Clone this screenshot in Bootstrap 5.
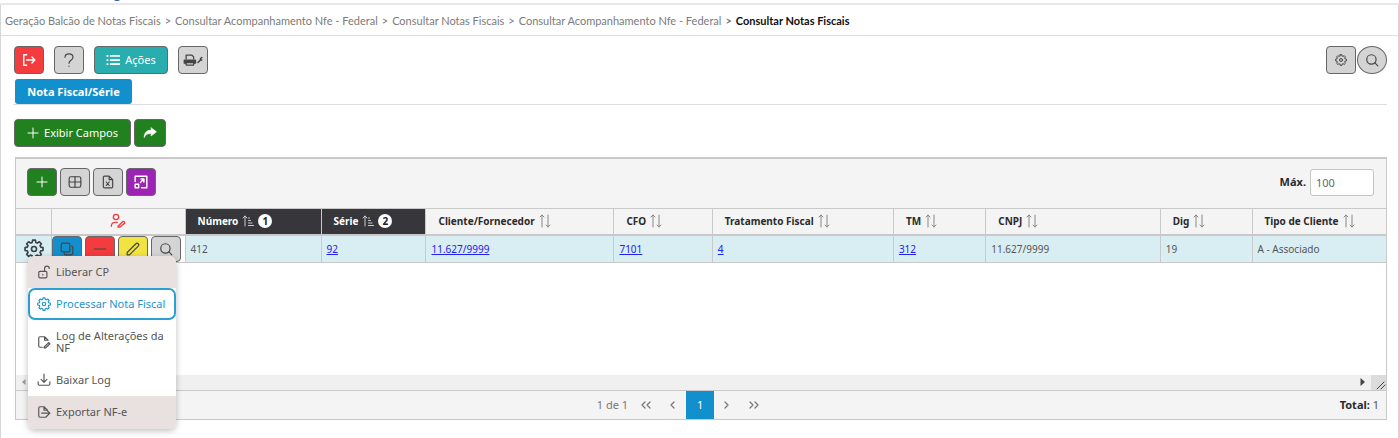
<!DOCTYPE html>
<html lang="pt-BR">
<head>
<meta charset="utf-8">
<meta name="viewport" content="width=device-width, initial-scale=1">
<title>Consultar Notas Fiscais</title>
<link rel="stylesheet" href="https://cdn.jsdelivr.net/npm/bootstrap@5.3.0/dist/css/bootstrap.min.css">
<style>
  body { font-family: "Noto Sans", "Open Sans", sans-serif; font-size: 11px; line-height: 16px; color: #555; background: #fff; overflow-x: hidden; }
  svg { fill: none; stroke: currentColor; stroke-width: 2; stroke-linecap: round; stroke-linejoin: round; display: block; flex: none; }
  .i12 { width: 12px; height: 12px; } .i14 { width: 14px; height: 14px; } .i16 { width: 16px; height: 16px; } .i20 { width: 20px; height: 20px; }
  .brand-strip { height: 5px; border-bottom: 2px solid #e8e8e8; overflow: hidden; padding-left: 112px; }
  .brand-strip span { display: block; width: 10px; height: 9px; margin-top: -8px; border-radius: 50%; background: #2457a0; }
  .page-frame { border: 1px solid #d6d6d6; border-width: 0 1px; min-height: calc(100vh - 5px); }
  .trail { font-family: Lato, sans-serif; font-size: 11px; height: 33px; padding: 0 4px; margin-bottom: -2px; border-bottom: 1px solid #dedede; --bs-breadcrumb-divider: ">"; }
  .trail .breadcrumb-item + .breadcrumb-item { padding-left: 4px; }
  .trail .breadcrumb-item + .breadcrumb-item::before { padding-right: 4px; color: #777; }
  .trail { height: 31px; margin-bottom: 0; }
  .trail .breadcrumb { padding-top: 2px; }
  .trail a { color: #7b7b7b; text-decoration: none; }
  .trail .active { color: #111; font-weight: 700; }
  .btn.tool { min-width: 30px; height: 28px; padding: 0; border: 1px solid #66666b; border-radius: 4px; font-size: 11px; line-height: 16px; color: #444; background: #d4d4d4; display: inline-flex; align-items: center; justify-content: center; }
  .btn.bg-exit { background: #f43b3e; color: #fff; }
  .btn.bg-teal { background: #29adae; color: #fff; width: 74px; gap: 5px; }
  .btn.bg-leaf { background: #21811f; color: #fff; }
  .btn.bg-plum { background: #9c24b2; color: #fff; }
  .btn.bg-sky { background: #1290cd; }
  .btn.bg-rose { background: #f43b3e; }
  .btn.bg-lemon { background: #f2e440; }
  .btn.round { border-radius: 50%; }
  .btn.fields { width: 117px; gap: 5px; }
  .btn.share { width: 32px; }
  .bar-main { gap: 10px; }
  .bar-side { gap: 1px; }
  .bar-fields { gap: 3px; margin-top: 14px; }
  .row-acts { gap: 3px; }
  .content-pad { padding: 10px 11px 0 13px; }
  .tabs-line { border-bottom: 1px solid #dedede; margin: 5px 0 0 -1px; }
  .tabs-line .nav-link { border: 0; background: #1290cd; color: #fff; font-weight: 700; font-size: 11px; width: 117px; height: 25px; margin-left: 2px; padding: 0; text-align: center; border-radius: 3px; }
  .data-box { border: 1px solid #c9c9c9; border-top-width: 2px; margin: 10px 0 0 1px; }
  .data-tools { background: #f4f4f4; height: 49px; padding: 0 12px 3px 11px; }
  .data-tools .btn { margin-right: 3px; }
  .max-input { width: 64px; height: 27px; padding: 0 5px; font-size: 11px; border: 1px solid #c4c4c4; border-radius: 3px; color: #666; }
  .data-table { table-layout: fixed; width: 100%; border-collapse: collapse; font-size: 10px; }
  .data-table th, .data-table td { height: 27px; padding: 0 0 0 5px; border: 1px solid #c9c9c9; vertical-align: middle; white-space: nowrap; }
  .data-table tr > :first-child { border-left: 0; } .data-table tr > :last-child { border-right: 0; }
  .data-table th { height: 26px; padding-left: 12px; background: #f4f4f4; color: #2b2b2b; font-weight: 700; border-bottom-width: 2px; }
  .data-table th.sorted { background: #36363b; color: #fff; }
  .data-table th.centered { padding: 0; }
  .data-table td { background: #d9eef3; }
  .data-table td.menu-cell, .data-table td.acts { padding: 0; }
  .data-table td.acts { background: #fff; }
  .data-table td a { color: #2020f0; }
  .data-table .tool { height: 26px; }
  .sort { width: 12px; height: 14px; color: #888; stroke-width: 1; }
  .sorted .sort { color: #ccc; }
  .order { width: 14px; height: 14px; border-radius: 50%; background: #fff; color: #222; display: inline-flex; align-items: center; justify-content: center; }
  .c-gear { width: 35px; } .c-acts { width: 134px; } .c-num { width: 9.93%; } .c-serie { width: 7.66%; } .c-client { width: 13.72%; }
  .c-cfo { width: 7.18%; } .c-trat { width: 13.22%; } .c-tm { width: 6.74%; } .c-cnpj { width: 12.74%; } .c-dig { width: 6.7%; }
  .gear-btn { background: none; border: 0; padding: 0; color: #3b4248; display: flex; width: 36px; justify-content: center; }
  .row-menu.dropdown-menu { top: 17px; left: 12px; width: 148px; min-width: 0; padding: 0; border: 0; border-radius: 7px; overflow: hidden; font-size: 11px; box-shadow: 0 2px 6px rgba(0,0,0,.25); }
  .row-menu .dropdown-item { display: flex; align-items: center; gap: 5px; min-height: 32px; padding: 0 0 0 9px; line-height: 12px; white-space: normal; color: #555; }
  .row-menu .soft { background: #e9e1e0; }
  .row-menu .picked { border: 2px solid #2e9fd3; border-radius: 7px; color: #2494cb; padding-left: 7px; }
  .row-menu .tall { min-height: 44px; }
  .row-menu .last { min-height: 33px; }
  .free-space { height: 112px; }
  .h-scroll { height: 15px; background: #f0f0f0; padding-left: 5px; color: #444; }
  .h-scroll .corner { width: 15px; height: 15px; background: #dcdcdc; margin-left: 6px; }
  .data-foot { height: 30px; border-top: 1px solid #c9c9c9; border-bottom: 1px solid #c9c9c9; background: #f4f4f4; display: grid; grid-template-columns: 1fr auto 1fr; align-items: center; font-size: 11px; padding-right: 7px; margin-bottom: -1px; }
  .pager { margin-right: 30px; color: #777; }
  .data-foot .page-link { width: 28px; height: 28px; padding: 0; border: 0; border-radius: 0; background: none; color: #777; font-size: 11px; display: flex; align-items: center; justify-content: center; }
  .data-foot .active .page-link { background: #1290cd; color: #fff; }
  .dark { color: #2b2b2b; }
</style>
</head>
<body>
<svg width="0" height="0" class="position-absolute" aria-hidden="true">
  <symbol id="gear" viewBox="0 0 24 24"><path d="M10.3 3h3.4l.5 2.7 1.9.8 2.3-1.6 2.4 2.4-1.5 2.3.8 1.8 2.7.6v3.4l-2.7.5-.8 1.9 1.5 2.3-2.4 2.4-2.3-1.6-1.9.8-.5 2.7h-3.4l-.5-2.7-1.9-.8-2.3 1.6-2.4-2.4 1.6-2.3-.8-1.9-2.7-.5V12l2.7-.6.8-1.8-1.6-2.3 2.4-2.4 2.3 1.6 1.9-.8z" transform="translate(0 -1.6)"/><circle cx="12" cy="12" r="3"/></symbol>
  <symbol id="search" viewBox="0 0 24 24"><circle cx="11" cy="11" r="8"/><path d="M17 17l5 5"/></symbol>
  <symbol id="plus" viewBox="0 0 24 24"><path d="M12 2v20M2 12h20"/></symbol>
  <symbol id="sort" viewBox="0 0 12 14"><path d="M3 13V1M1 3l2-2 2 2M9 1v12M7 11l2 2 2-2"/></symbol>
  <symbol id="sorted" viewBox="0 0 12 14"><path d="M3 12V2M1 4l2-2 2 2M6.500 4h1M6.500 6.500h2M6.500 9h3.500M6.500 11.500h5"/></symbol>
</svg>

<div class="brand-strip"><span></span></div>
<div class="page-frame">
  <nav class="trail d-flex align-items-center" aria-label="Navegação">
    <ol class="breadcrumb m-0">
      <li class="breadcrumb-item"><a href="#">Geração Balcão de Notas Fiscais</a></li>
      <li class="breadcrumb-item"><a href="#">Consultar Acompanhamento Nfe - Federal</a></li>
      <li class="breadcrumb-item"><a href="#">Consultar Notas Fiscais</a></li>
      <li class="breadcrumb-item"><a href="#">Consultar Acompanhamento Nfe - Federal</a></li>
      <li class="breadcrumb-item active" aria-current="page">Consultar Notas Fiscais</li>
    </ol>
  </nav>

  <main class="content-pad">
    <div class="d-flex justify-content-between">
      <div class="d-flex bar-main">
        <button class="btn tool bg-exit" aria-label="Sair"><svg class="i14" viewBox="0 0 24 24"><path d="M8 3H3v18h5M8 12h14M17 7l5 5-5 5" stroke-width="2.500"/></svg></button>
        <button class="btn tool" aria-label="Ajuda"><svg class="i16" viewBox="0 0 24 24"><path d="M6 8c0-7 12-7 12 0 0 5-6 4-6 9M12 21v.5" stroke-width="1.700"/></svg></button>
        <button class="btn tool bg-teal"><svg class="i14" viewBox="0 0 24 24"><path d="M8 5h15M8 12h15M8 19h15M2 5h1M2 12h1M2 19h1" stroke-width="3"/></svg>Ações</button>
        <button class="btn tool" aria-label="Imprimir"><svg width="20" height="14" viewBox="0 0 32 22"><path d="M5 9V3h9l3 3v3"/><path d="M2 11h18v5H2z" fill="currentColor"/><path d="M5 15h12v4H5z" fill="#d4d4d4"/><path d="M24 15l4-4M30 7l-2 2v2h2" stroke-width="2.500"/></svg></button>
      </div>
      <div class="d-flex bar-side">
        <button class="btn tool" aria-label="Configurar"><svg class="i12"><use href="#gear"/></svg></button>
        <button class="btn tool round" aria-label="Pesquisar"><svg class="i14"><use href="#search"/></svg></button>
      </div>
    </div>

    <div class="nav tabs-line"><button class="nav-link active">Nota Fiscal/Série</button></div>

    <div class="d-flex bar-fields">
      <button class="btn tool bg-leaf fields"><svg class="i12"><use href="#plus"/></svg>Exibir Campos</button>
      <button class="btn tool bg-leaf share" aria-label="Compartilhar"><svg class="i14" viewBox="0 0 24 24"><path d="M14 3l9 7-9 7v-4C8 13 5 14 2 20c0-8 4-13 12-13z" fill="currentColor" stroke-width="1"/></svg></button>
    </div>

    <section class="data-box">
      <div class="data-tools d-flex align-items-center">
        <button class="btn tool bg-leaf" aria-label="Incluir"><svg class="i12"><use href="#plus"/></svg></button>
        <button class="btn tool" aria-label="Grade"><svg class="i14" viewBox="0 0 24 24"><rect x="2" y="3" width="20" height="18" rx="3"/><path d="M12 3v18M2 12h20"/></svg></button>
        <button class="btn tool" aria-label="Exportar planilha"><svg class="i14" viewBox="0 0 24 24"><path d="M14 2H6q-2 0-2 2v16q0 2 2 2h12q2 0 2-2V8zM14 2v6h6M9 12l5 6M14 12l-5 6"/></svg></button>
        <button class="btn tool bg-plum" aria-label="Expandir"><svg class="i14" viewBox="0 0 24 24"><path d="M2 11V2h20v20h-9M2 16h6v6H2zM11 13l6-6M12 7h5v5" stroke-width="2.500"/></svg></button>
        <label for="max" class="fw-bold dark ms-auto me-1">Máx.</label>
        <input id="max" class="max-input" value="100">
      </div>

      <table class="data-table">
        <colgroup><col class="c-gear"><col class="c-acts"><col class="c-num"><col class="c-serie"><col class="c-client"><col class="c-cfo"><col class="c-trat"><col class="c-tm"><col class="c-cnpj"><col class="c-dig"><col></colgroup>
        <thead>
          <tr>
            <th></th>
            <th class="centered"><svg class="i16 mx-auto" viewBox="0 0 24 24" color="#f43b3e"><circle cx="9" cy="6" r="4"/><path d="M2 20q0-6 6-6h3M12 20l7-7q2-1 3 1t-1 2l-6 5h-3z"/></svg></th>
            <th class="sorted"><div class="d-flex align-items-center gap-1">Número <svg class="sort"><use href="#sorted"/></svg><span class="order">1</span></div></th>
            <th class="sorted"><div class="d-flex align-items-center gap-1">Série <svg class="sort"><use href="#sorted"/></svg><span class="order">2</span></div></th>
            <th><div class="d-flex align-items-center gap-1">Cliente/Fornecedor <svg class="sort"><use href="#sort"/></svg></div></th>
            <th><div class="d-flex align-items-center gap-1">CFO <svg class="sort"><use href="#sort"/></svg></div></th>
            <th><div class="d-flex align-items-center gap-1">Tratamento Fiscal <svg class="sort"><use href="#sort"/></svg></div></th>
            <th><div class="d-flex align-items-center gap-1">TM <svg class="sort"><use href="#sort"/></svg></div></th>
            <th><div class="d-flex align-items-center gap-1">CNPJ <svg class="sort"><use href="#sort"/></svg></div></th>
            <th><div class="d-flex align-items-center gap-1">Dig <svg class="sort"><use href="#sort"/></svg></div></th>
            <th><div class="d-flex align-items-center gap-1">Tipo de Cliente <svg class="sort"><use href="#sort"/></svg></div></th>
          </tr>
        </thead>
        <tbody>
          <tr>
            <td class="menu-cell">
              <div class="dropdown">
                <button class="gear-btn" aria-label="Opções" aria-expanded="true"><svg class="i20"><use href="#gear"/></svg></button>
                <ul class="dropdown-menu row-menu show">
                  <li><a class="dropdown-item soft" href="#"><svg class="i14" viewBox="0 0 24 24"><rect x="3" y="11" width="14" height="11" rx="2"/><path d="M13 11V6q0-4 4-4t4 4M10 16v1"/></svg>Liberar CP</a></li>
                  <li><a class="dropdown-item picked" href="#"><svg class="i14"><use href="#gear"/></svg>Processar Nota Fiscal</a></li>
                  <li><a class="dropdown-item tall" href="#"><svg class="i14" viewBox="0 0 24 24"><path d="M9 21H5q-2 0-2-2V5q0-2 2-2h8l6 6M13 3v6h6M12 21l8-8 2 2-7 7h-3z"/></svg>Log de Alterações da NF</a></li>
                  <li><a class="dropdown-item" href="#"><svg class="i14" viewBox="0 0 24 24"><path d="M2 15v4q0 2 2 2h16q2 0 2-2v-4M12 2v13M7 11l5 5 5-5"/></svg>Baixar Log</a></li>
                  <li><a class="dropdown-item soft last" href="#"><svg class="i14" viewBox="0 0 24 24"><path d="M18 9l-6-6H5Q3 3 3 5v14q0 2 2 2h10l3-3M12 3v6h6M8 14h14M18 10l4 4-4 4"/></svg>Exportar NF-e</a></li>
                </ul>
              </div>
            </td>
            <td class="acts">
              <div class="d-flex row-acts">
                <button class="btn tool bg-sky" aria-label="Copiar"><svg class="i14" viewBox="0 0 24 24"><rect x="2" y="2" width="15" height="15" rx="3"/><path d="M20 7q2 0 2 3v9q0 3-3 3h-9q-3 0-3-3"/></svg></button>
                <button class="btn tool bg-rose" aria-label="Excluir"><svg class="i14" viewBox="0 0 24 24"><path d="M2 12h20"/></svg></button>
                <button class="btn tool bg-lemon" aria-label="Editar"><svg class="i14" viewBox="0 0 24 24"><path d="M2 22v-4L17 3q2-2 4 0t0 4L6 22z"/></svg></button>
                <button class="btn tool" aria-label="Visualizar"><svg class="i14"><use href="#search"/></svg></button>
              </div>
            </td>
            <td>412</td>
            <td><a href="#">92</a></td>
            <td><a href="#">11.627/9999</a></td>
            <td><a href="#">7101</a></td>
            <td><a href="#">4</a></td>
            <td><a href="#">312</a></td>
            <td>11.627/9999</td>
            <td>19</td>
            <td>A - Associado</td>
          </tr>
        </tbody>
      </table>
      <div class="free-space"></div>
      <div class="h-scroll d-flex align-items-center">
        <svg width="5" height="8" viewBox="0 0 5 8"><path d="M4.500 1v6L1 4z" fill="#999" stroke="none"/></svg>
        <svg class="ms-auto" width="5" height="8" viewBox="0 0 5 8"><path d="M.5 0v8L5 4z" fill="currentColor" stroke="none"/></svg>
        <div class="corner"><svg width="15" height="15" viewBox="0 0 15 15"><path d="M6 14l7-7M10 14l4-4" stroke-width="1"/></svg></div>
      </div>
      <footer class="data-foot">
        <span></span>
        <div class="d-flex align-items-center pager"><span>1 de 1</span>
          <ul class="pagination m-0 ms-1">
            <li class="page-item"><a class="page-link" href="#" aria-label="Primeira"><svg class="i12" viewBox="0 0 24 24"><path d="M10 6l-6 6 6 6M20 6l-6 6 6 6" stroke-width="2.500"/></svg></a></li>
            <li class="page-item"><a class="page-link" href="#" aria-label="Anterior"><svg class="i12" viewBox="0 0 24 24"><path d="M14 6l-6 6 6 6" stroke-width="2.500"/></svg></a></li>
            <li class="page-item active"><a class="page-link" href="#">1</a></li>
            <li class="page-item"><a class="page-link" href="#" aria-label="Próxima"><svg class="i12" viewBox="0 0 24 24"><path d="M8 6l6 6-6 6" stroke-width="2.500"/></svg></a></li>
            <li class="page-item"><a class="page-link" href="#" aria-label="Última"><svg class="i12" viewBox="0 0 24 24"><path d="M4 6l6 6-6 6M14 6l6 6-6 6" stroke-width="2.500"/></svg></a></li>
          </ul>
        </div>
        <div class="text-end"><b class="dark">Total:</b> 1</div>
      </footer>
    </section>
  </main>
</div>
<script src="https://cdn.jsdelivr.net/npm/bootstrap@5.3.0/dist/js/bootstrap.bundle.min.js"></script>
</body>
</html>
